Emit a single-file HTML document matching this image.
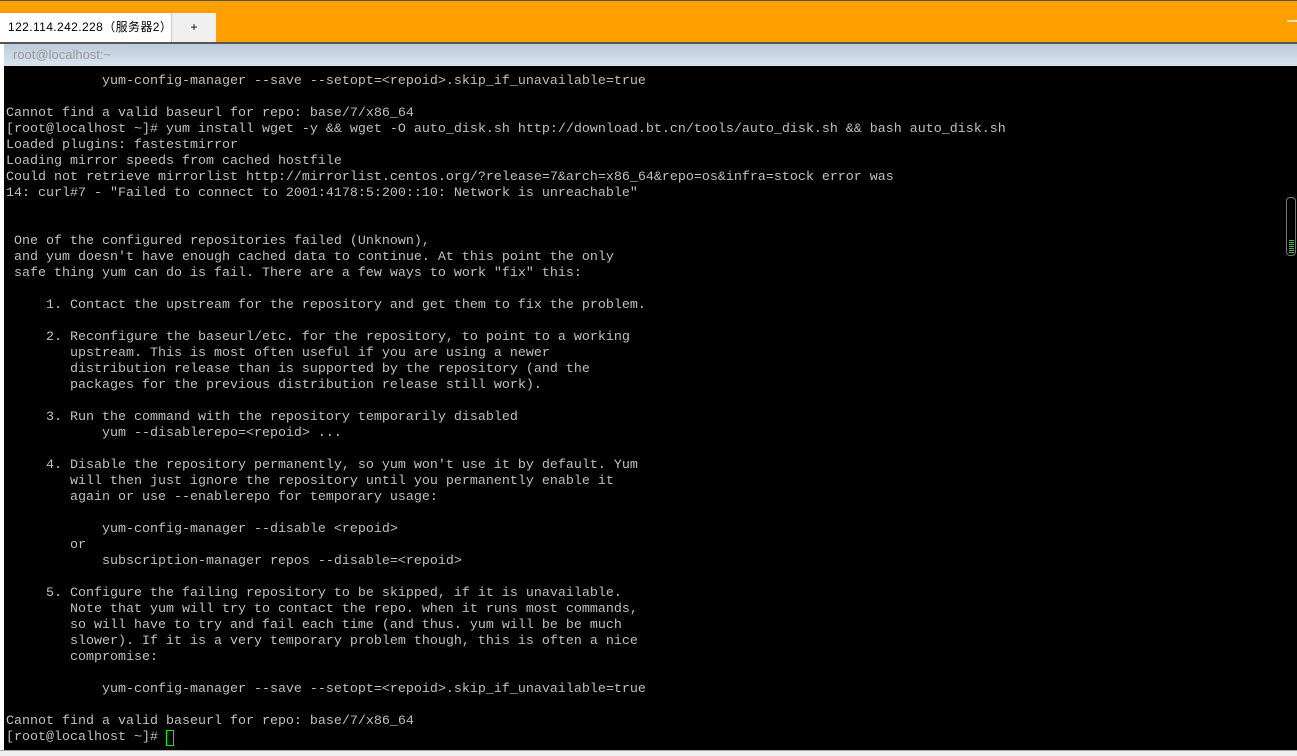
<!DOCTYPE html>
<html><head><meta charset="utf-8"><style>
*{margin:0;padding:0;box-sizing:border-box}
html,body{width:1297px;height:756px;overflow:hidden;background:#fff}
#top{position:absolute;left:0;top:0;width:1297px;height:42px;background:#ffa000;border-top:1px solid #555}
.tab{position:absolute;top:12px;height:30px;font:12px "Liberation Sans","Noto Sans CJK SC",sans-serif;color:#000;line-height:28px}
#t1{left:0;width:171px;background:#fff;padding-left:8px;letter-spacing:0.4px}
#t2{left:171px;width:45px;background:#efefef;text-align:center;border-left:1px solid #ccc}
#min{position:absolute;right:0;top:19px;width:10px;height:2px;background:#ffe0b0}
#line{position:absolute;left:0;top:42px;width:1297px;height:2px;background:#555}
#title{position:absolute;left:4px;top:44px;width:1293px;height:22px;background:linear-gradient(#bccbd8,#d8e4ee);font:13px "Liberation Sans",sans-serif;color:#999;padding-left:9px;line-height:21px}
#term{position:absolute;left:4px;top:66px;width:1293px;height:684px;background:#000}
pre{position:absolute;left:2px;top:8px;font:13.33px/16px "Liberation Mono",monospace;color:#c0c0c0;letter-spacing:0}
#cur{display:inline-block;width:8px;height:16px;border:1px solid #0f0;vertical-align:top}
#sb{position:absolute;left:1286px;top:197px;width:10px;height:59px;border:1px solid #777;border-radius:4px}
#sb i{position:absolute;left:2px;width:5px;height:1px;background:#3c3}
#bot{position:absolute;left:0;top:750px;width:1297px;height:6px;background:#f0f0f0;border-top:1px solid #aaa}
</style></head><body>
<div id="top"><div class="tab" id="t1">122.114.242.228（服务器2）</div><div class="tab" id="t2">+</div><div id="min"></div></div>
<div id="line"></div>
<div id="title">root@localhost:~</div>
<div id="term"><pre>            yum-config-manager --save --setopt=&lt;repoid&gt;.skip_if_unavailable=true

Cannot find a valid baseurl for repo: base/7/x86_64
[root@localhost ~]# yum install wget -y &amp;&amp; wget -O auto_disk.sh http://download.bt.cn/tools/auto_disk.sh &amp;&amp; bash auto_disk.sh
Loaded plugins: fastestmirror
Loading mirror speeds from cached hostfile
Could not retrieve mirrorlist http://mirrorlist.centos.org/?release=7&amp;arch=x86_64&amp;repo=os&amp;infra=stock error was
14: curl#7 - "Failed to connect to 2001:4178:5:200::10: Network is unreachable"


 One of the configured repositories failed (Unknown),
 and yum doesn't have enough cached data to continue. At this point the only
 safe thing yum can do is fail. There are a few ways to work "fix" this:

     1. Contact the upstream for the repository and get them to fix the problem.

     2. Reconfigure the baseurl/etc. for the repository, to point to a working
        upstream. This is most often useful if you are using a newer
        distribution release than is supported by the repository (and the
        packages for the previous distribution release still work).

     3. Run the command with the repository temporarily disabled
            yum --disablerepo=&lt;repoid&gt; ...

     4. Disable the repository permanently, so yum won't use it by default. Yum
        will then just ignore the repository until you permanently enable it
        again or use --enablerepo for temporary usage:

            yum-config-manager --disable &lt;repoid&gt;
        or
            subscription-manager repos --disable=&lt;repoid&gt;

     5. Configure the failing repository to be skipped, if it is unavailable.
        Note that yum will try to contact the repo. when it runs most commands,
        so will have to try and fail each time (and thus. yum will be be much
        slower). If it is a very temporary problem though, this is often a nice
        compromise:

            yum-config-manager --save --setopt=&lt;repoid&gt;.skip_if_unavailable=true

Cannot find a valid baseurl for repo: base/7/x86_64
[root@localhost ~]# <span id="cur"></span></pre></div>
<div id="sb"><i style="top:42px"></i><i style="top:44px"></i><i style="top:46px"></i><i style="top:48px"></i><i style="top:50px"></i><i style="top:52px"></i><i style="top:54px"></i></div>
<div id="bot"></div>
</body></html>
